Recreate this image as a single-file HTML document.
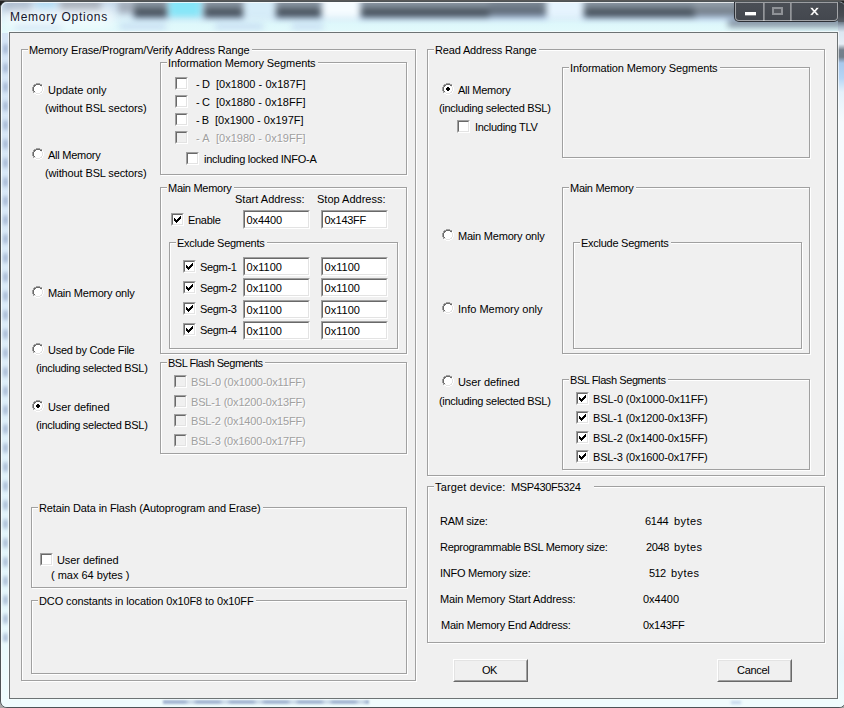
<!DOCTYPE html>
<html><head><meta charset="utf-8"><title>Memory Options</title>
<style>
html,body{margin:0;padding:0;}
body{width:844px;height:708px;overflow:hidden;position:relative;background:linear-gradient(#1b1b1b 0,#1b1b1b 50%,#a8a8a8 50%);font:11px/13px "Liberation Sans", sans-serif;color:#000;}
.a{position:absolute;}
.t{position:absolute;white-space:pre;line-height:13px;height:13px;font-size:11px;color:#000;}
.d{color:#a0a0a0;text-shadow:1px 1px 0 #fff;}
.g{position:absolute;border:1px solid #a0a0a0;box-shadow:1px 1px 0 #fff, inset 1px 1px 0 #fff;box-sizing:border-box;}
.gl{position:absolute;background:#f0f0f0;height:13px;line-height:13px;white-space:pre;}
.e{position:absolute;box-sizing:border-box;background:#fff;border:1px solid;border-color:#a0a0a0 #fff #fff #a0a0a0;}
.e i{position:absolute;left:0;top:0;right:0;bottom:0;border:1px solid;border-color:#696969 #e3e3e3 #e3e3e3 #696969;}
.e span{position:absolute;left:2.5px;top:3px;line-height:13px;white-space:pre;}
.c{position:absolute;width:13px;height:13px;box-sizing:border-box;background:#fff;border:1px solid;border-color:#a0a0a0 #fff #fff #a0a0a0;}
.c i{position:absolute;left:0;top:0;right:0;bottom:0;border:1px solid;border-color:#696969 #e3e3e3 #e3e3e3 #696969;}
.c.x{background:#f0f0f0;}
.c svg{position:absolute;left:1px;top:1px;}
.r{position:absolute;width:12px;height:12px;}
.btn{position:absolute;box-sizing:border-box;width:75px;height:23px;background:#f0f0f0;border:1px solid;border-color:#fff #696969 #696969 #fff;text-align:center;line-height:19px;}
.btn i{position:absolute;left:0;top:0;right:0;bottom:0;border:1px solid;border-color:#e3e3e3 #a0a0a0 #a0a0a0 #e3e3e3;}
</style></head><body>
<!-- desktop behind (top rows) -->
<div class="a" style="left:0;top:0;width:844px;height:3px;background:linear-gradient(#585858 0,#585858 1px,#222 1px)"></div>
<!-- window frame -->
<div class="a" id="win" style="left:0;top:1px;width:846px;height:707px;box-sizing:border-box;border:1px solid #4d5356;border-radius:7px 7px 7px 7px;background:#dff8fb;overflow:hidden">
 <!-- glass title area -->
 <div class="a" style="left:0;top:0;width:844px;height:31px;background:linear-gradient(to bottom,#c6d8ea 0,#cfe2f1 8px,#d9eff8 16px,#def8fb 22px,#e2fafc 30px)"></div>
 <div class="a" style="left:0;top:-8px;width:860px;height:40px;filter:blur(3px)">
  <div class="a" style="left:3px;top:6px;width:27px;height:12px;background:#a9b9cc"></div>
  <div class="a" style="left:35px;top:6px;width:20px;height:10px;background:#aedaf5"></div>
  <div class="a" style="left:59px;top:6px;width:41px;height:11px;background:#a0a8b4"></div>
  <div class="a" style="left:117px;top:6px;width:17px;height:13px;background:#a4aebb"></div>
  <div class="a" style="left:131px;top:21px;width:37px;height:4px;background:#b4cdf0"></div>
  <div class="a" style="left:201px;top:21px;width:43px;height:4px;background:#b4cdf0"></div>
  <div class="a" style="left:273px;top:21px;width:49px;height:4px;background:#b4cdf0"></div>
  <div class="a" style="left:358px;top:21px;width:132px;height:4px;background:#b4cdf0"></div>
  <div class="a" style="left:581px;top:21px;width:281px;height:4px;background:#b4cdf0"></div>
  <div class="a" style="left:486px;top:21px;width:61px;height:4px;background:#b4cdf0"></div>
  <div class="a" style="left:133px;top:2px;width:33px;height:21px;background:linear-gradient(#929eaa 0,#8f9ba7 7px,#6f7b87 12px,#46505a 16px,#39434c 19px,#39434c)"></div>
  <div class="a" style="left:203px;top:2px;width:39px;height:21px;background:linear-gradient(#929eaa 0,#8f9ba7 7px,#6f7b87 12px,#46505a 16px,#39434c 19px,#39434c)"></div>
  <div class="a" style="left:275px;top:2px;width:45px;height:21px;background:linear-gradient(#929eaa 0,#8f9ba7 7px,#6f7b87 12px,#46505a 16px,#39434c 19px,#39434c)"></div>
  <div class="a" style="left:360px;top:2px;width:128px;height:21px;background:linear-gradient(#929eaa 0,#8f9ba7 7px,#6f7b87 12px,#46505a 16px,#39434c 19px,#39434c)"></div>
  <div class="a" style="left:583px;top:2px;width:112px;height:21px;background:linear-gradient(#929eaa 0,#8f9ba7 7px,#6f7b87 12px,#46505a 16px,#39434c 19px,#39434c)"></div>
  <div class="a" style="left:693px;top:2px;width:45px;height:20px;background:linear-gradient(#98a3ae 0,#95a0ab 7px,#848f9a 12px,#737e89 16px,#6d7883 19px,#6d7883)"></div>
  <div class="a" style="left:736px;top:2px;width:124px;height:21px;background:linear-gradient(#929eaa 0,#8f9ba7 7px,#6f7b87 12px,#46505a 16px,#39434c 19px,#39434c)"></div>
  <div class="a" style="left:488px;top:2px;width:57px;height:20px;background:linear-gradient(#8b97a3 0,#7b8794 8px,#65717e 13px,#5c6875)"></div>
  <div class="a" style="left:168px;top:2px;width:32px;height:21px;background:#86e6f8"></div>
  <div class="a" style="left:244px;top:2px;width:29px;height:21px;background:#d6edf9"></div>
  <div class="a" style="left:322px;top:2px;width:36px;height:21px;background:#f6fcff"></div>
  <div class="a" style="left:546px;top:2px;width:35px;height:21px;background:#e6f4fe"></div>
  <div class="a" style="left:727px;top:26px;width:133px;height:7px;background:#7e8b9b"></div>
  <div class="a" style="left:14px;top:30px;width:46px;height:5px;background:#c4d9f1"></div>
  <div class="a" style="left:119px;top:30px;width:46px;height:5px;background:#c4d9f1"></div>
  <div class="a" style="left:214px;top:30px;width:48px;height:5px;background:#c4d9f1"></div>
  <div class="a" style="left:291px;top:30px;width:31px;height:5px;background:#c4d9f1"></div>
 </div>
 <div class="a" style="left:2px;top:6px;width:112px;height:20px;border-radius:10px;background:rgba(255,255,255,.55);filter:blur(5px)"></div>
 <div class="a" id="ttl" style="left:9px;top:8px;font-size:12px;line-height:14px;height:14px;white-space:pre;color:#15152a;letter-spacing:0.7px">Memory Options</div>
 <!-- inner highlight -->
 <div class="a" style="left:0;top:0;width:850px;height:705px;box-sizing:border-box;border:1px solid rgba(255,255,255,.75);border-radius:6px;"></div>
 <!-- caption buttons -->
 <div class="a" style="left:733px;top:-2px;width:105px;height:22px;box-sizing:border-box;border:1px solid rgba(40,44,50,.85);border-radius:0 0 5px 5px;background:linear-gradient(#4b4f56,#43474e)">
  <div class="a" style="left:0;top:1px;width:103px;height:19px;box-sizing:border-box;border:1px solid rgba(255,255,255,.5);border-top-color:rgba(255,255,255,.45);border-radius:0 0 4px 4px"></div>
  <div class="a" style="left:28px;top:2px;width:1px;height:18px;background:rgba(255,255,255,.42)"></div>
  <div class="a" style="left:29px;top:2px;width:1px;height:18px;background:rgba(255,255,255,.30)"></div>
  <div class="a" style="left:55px;top:2px;width:1px;height:18px;background:rgba(255,255,255,.42)"></div>
  <div class="a" style="left:56px;top:2px;width:1px;height:18px;background:rgba(255,255,255,.30)"></div>
  <!-- min -->
  <div class="a" style="left:10px;top:11px;width:11px;height:3px;background:#fff"></div>
  <div class="a" style="left:10px;top:14px;width:11px;height:1px;background:rgba(255,255,255,.35)"></div>
  <!-- max (disabled) -->
  <div class="a" style="left:37px;top:6px;width:11px;height:8px;box-sizing:border-box;border:2px solid #8f9297;background:#55585e"></div>
  <!-- close -->
  <svg class="a" style="left:73px;top:5px" width="13" height="11" viewBox="0 0 13 11"><path d="M1.6 1.5h3l1.9 2.5 1.9-2.5h3l-3.4 3.9 3.4 3.9h-3l-1.9-2.5-1.9 2.5h-3l3.4-3.9z" fill="#fff" stroke="#2a2c30" stroke-width=".5"/></svg>
 </div>
 <div class="a" style="left:837px;top:0;width:9px;height:20px;background:linear-gradient(#3c4046,#484c53 70%,#596069)"></div>
 <!-- side strips decoration -->
 <div class="a" style="left:1px;top:31px;width:7px;height:668px;background:linear-gradient(to bottom,#d6e6f6,#dcecf8 40%,#e6f8fc 85%,#effdfe)"></div>
 <div class="a" style="left:2px;top:40px;width:5px;height:600px;filter:blur(1.5px);opacity:.8;background:repeating-linear-gradient(to bottom,rgba(140,160,195,0) 0,rgba(140,160,195,.75) 5px,rgba(140,160,195,.75) 9px,rgba(140,160,195,0) 14px,rgba(140,160,195,0) 19px)"></div>
 <div class="a" style="left:837px;top:20px;width:8px;height:680px;background:linear-gradient(to bottom,#6f7b88 0,#a9b8c8 5px,#dbe6f0 10px,#e6eef6 22px,#75808c 28px,#737f8b 35px,#a8c8ec 41px,#b5d5f5 56px,#e4f1fb 70px,#f6fbfe 100px,#f7fcfe 560px,#eaf6fb 640px,#effcfd)"></div>
 <div class="a" style="left:1px;top:698px;width:844px;height:8px;background:#effcfd"></div>
 <div class="a" style="left:162px;top:698px;width:206px;height:4px;filter:blur(1.3px);background:repeating-linear-gradient(to right,rgba(150,170,202,.85) 0,rgba(150,170,202,.85) 22px,rgba(175,192,218,.55) 26px,rgba(175,192,218,.55) 30px,rgba(150,170,202,.85) 34px)"></div>
 <div class="a" style="left:730px;top:699px;width:10px;height:3px;filter:blur(1.5px);background:rgba(170,195,225,.7)"></div>
</div>
<div class="a" style="left:9px;top:32px;width:829px;height:667px;box-sizing:border-box;border:1px solid #6d7374;background:#f0f0f0;box-shadow:0 0 0 1px rgba(255,255,255,.6)"></div>
<div class="btn" style="left:453px;top:659px"><i></i></div>
<div class="btn" style="left:717px;top:659px"><i></i></div>
<div class="g" style="left:21px;top:49px;width:395px;height:632px"></div><div class="gl" style="left:28px;top:44px;width:224px;"><span style="margin-left:1px;letter-spacing:-0.124px">Memory Erase/Program/Verify Address Range</span></div>
<div class="g" style="left:160px;top:62px;width:247px;height:113px"></div><div class="gl" style="left:167px;top:57px;width:151px;"><span style="margin-left:1px;letter-spacing:-0.107px">Information Memory Segments</span></div>
<div class="g" style="left:160px;top:187px;width:247px;height:167px"></div><div class="gl" style="left:167px;top:182px;width:67px;"><span style="margin-left:1px;letter-spacing:-0.284px">Main Memory</span></div>
<div class="g" style="left:169px;top:242px;width:229px;height:107px"></div><div class="gl" style="left:176px;top:237px;width:91px;"><span style="margin-left:1px;letter-spacing:-0.264px">Exclude Segments</span></div>
<div class="g" style="left:160px;top:362px;width:247px;height:92px"></div><div class="gl" style="left:167px;top:357px;width:98px;"><span style="margin-left:1px;letter-spacing:-0.468px">BSL Flash Segments</span></div>
<div class="g" style="left:31px;top:507px;width:376px;height:81px"></div><div class="gl" style="left:38px;top:502px;width:225px;"><span style="margin-left:1px;letter-spacing:-0.121px">Retain Data in Flash (Autoprogram and Erase)</span></div>
<div class="g" style="left:31px;top:600px;width:376px;height:74px"></div><div class="gl" style="left:38px;top:595px;width:218px;"><span style="margin-left:1px;letter-spacing:-0.119px">DCO constants in location 0x10F8 to 0x10FF</span></div>
<div class="g" style="left:427px;top:49px;width:398px;height:427px"></div><div class="gl" style="left:434px;top:44px;width:105px;"><span style="margin-left:1px;letter-spacing:-0.171px">Read Address Range</span></div>
<div class="g" style="left:562px;top:67px;width:248px;height:91px"></div><div class="gl" style="left:569px;top:62px;width:151px;"><span style="margin-left:1px;letter-spacing:-0.107px">Information Memory Segments</span></div>
<div class="g" style="left:562px;top:187px;width:248px;height:167px"></div><div class="gl" style="left:569px;top:182px;width:67px;"><span style="margin-left:1px;letter-spacing:-0.284px">Main Memory</span></div>
<div class="g" style="left:573px;top:242px;width:229px;height:107px"></div><div class="gl" style="left:580px;top:237px;width:91px;"><span style="margin-left:1px;letter-spacing:-0.264px">Exclude Segments</span></div>
<div class="g" style="left:562px;top:379px;width:248px;height:91px"></div><div class="gl" style="left:569px;top:374px;width:99px;"><span style="margin-left:1px;letter-spacing:-0.412px">BSL Flash Segments</span></div>
<div class="g" style="left:427px;top:486px;width:398px;height:157px"></div><div class="gl" style="left:434px;top:481px;width:160px;"><span style="margin-left:1px;letter-spacing:0.144px">Target device:</span></div>
<span class="t" style="left:48px;top:84px;letter-spacing:-0.020px">Update only</span>
<span class="t" style="left:45px;top:102px;letter-spacing:-0.126px">(without BSL sectors)</span>
<span class="t" style="left:48px;top:149px;letter-spacing:-0.252px">All Memory</span>
<span class="t" style="left:45px;top:167px;letter-spacing:-0.126px">(without BSL sectors)</span>
<span class="t" style="left:48px;top:287px;letter-spacing:-0.210px">Main Memory only</span>
<span class="t" style="left:48px;top:344px;letter-spacing:-0.235px">Used by Code File</span>
<span class="t" style="left:36px;top:362px;letter-spacing:-0.297px">(including selected BSL)</span>
<span class="t" style="left:48px;top:401px;letter-spacing:-0.073px">User defined</span>
<span class="t" style="left:36px;top:419px;letter-spacing:-0.297px">(including selected BSL)</span>
<span class="t" style="left:196px;top:78px;letter-spacing:-0.391px">- D</span>
<span class="t" style="left:216px;top:78px;letter-spacing:0.049px">[0x1800 - 0x187F]</span>
<span class="t" style="left:196px;top:96px;letter-spacing:-0.391px">- C</span>
<span class="t" style="left:216px;top:96px;letter-spacing:0.013px">[0x1880 - 0x18FF]</span>
<span class="t" style="left:196px;top:114px;letter-spacing:-0.521px">- B</span>
<span class="t" style="left:215px;top:114px;letter-spacing:-0.010px">[0x1900 - 0x197F]</span>
<span class="t d" style="left:196px;top:132px;letter-spacing:0.016px">- A</span>
<span class="t d" style="left:216px;top:132px;letter-spacing:0.013px">[0x1980 - 0x19FF]</span>
<span class="t" style="left:204px;top:153px;letter-spacing:-0.266px">including locked INFO-A</span>
<span class="t" style="left:235px;top:193px;letter-spacing:0.029px">Start Address:</span>
<span class="t" style="left:317px;top:193px;letter-spacing:0.000px">Stop Address:</span>
<span class="t" style="left:188px;top:214px;letter-spacing:-0.294px">Enable</span>
<span class="t" style="left:200px;top:261px;letter-spacing:-0.339px">Segm-1</span>
<span class="t" style="left:200px;top:282px;letter-spacing:-0.339px">Segm-2</span>
<span class="t" style="left:200px;top:303px;letter-spacing:-0.339px">Segm-3</span>
<span class="t" style="left:200px;top:324px;letter-spacing:-0.339px">Segm-4</span>
<span class="t d" style="left:191px;top:376px;letter-spacing:-0.128px">BSL-0 (0x1000-0x11FF)</span>
<span class="t d" style="left:191px;top:396px;letter-spacing:-0.167px">BSL-1 (0x1200-0x13FF)</span>
<span class="t d" style="left:191px;top:415px;letter-spacing:-0.167px">BSL-2 (0x1400-0x15FF)</span>
<span class="t d" style="left:191px;top:435px;letter-spacing:-0.167px">BSL-3 (0x1600-0x17FF)</span>
<span class="t" style="left:57px;top:554px;letter-spacing:-0.073px">User defined</span>
<span class="t" style="left:51px;top:569px;letter-spacing:-0.022px">( max 64 bytes )</span>
<span class="t" style="left:458px;top:84px;letter-spacing:-0.252px">All Memory</span>
<span class="t" style="left:439px;top:102px;letter-spacing:-0.297px">(including selected BSL)</span>
<span class="t" style="left:475px;top:121px;letter-spacing:-0.288px">Including TLV</span>
<span class="t" style="left:458px;top:230px;letter-spacing:-0.210px">Main Memory only</span>
<span class="t" style="left:458px;top:303px;letter-spacing:0.008px">Info Memory only</span>
<span class="t" style="left:458px;top:376px;letter-spacing:-0.073px">User defined</span>
<span class="t" style="left:439px;top:395px;letter-spacing:-0.297px">(including selected BSL)</span>
<span class="t" style="left:593px;top:393px;letter-spacing:-0.128px">BSL-0 (0x1000-0x11FF)</span>
<span class="t" style="left:593px;top:412px;letter-spacing:-0.167px">BSL-1 (0x1200-0x13FF)</span>
<span class="t" style="left:593px;top:432px;letter-spacing:-0.167px">BSL-2 (0x1400-0x15FF)</span>
<span class="t" style="left:593px;top:451px;letter-spacing:-0.167px">BSL-3 (0x1600-0x17FF)</span>
<span class="t" style="left:511px;top:481px;letter-spacing:-0.354px">MSP430F5324</span>
<span class="t" style="left:440px;top:515px;letter-spacing:-0.292px">RAM size:</span>
<span class="t" style="left:440px;top:541px;letter-spacing:-0.303px">Reprogrammable BSL Memory size:</span>
<span class="t" style="left:440px;top:567px;letter-spacing:-0.249px">INFO Memory size:</span>
<span class="t" style="left:440px;top:593px;letter-spacing:-0.126px">Main Memory Start Address:</span>
<span class="t" style="left:441px;top:619px;letter-spacing:-0.234px">Main Memory End Address:</span>
<span class="t" style="left:645px;top:515px;letter-spacing:-0.246px">6144</span>
<span class="t" style="left:674px;top:515px;letter-spacing:0.441px">bytes</span>
<span class="t" style="left:646px;top:541px;letter-spacing:-0.371px">2048</span>
<span class="t" style="left:674px;top:541px;letter-spacing:0.441px">bytes</span>
<span class="t" style="left:649px;top:567px;letter-spacing:-0.620px">512</span>
<span class="t" style="left:671px;top:567px;letter-spacing:0.441px">bytes</span>
<span class="t" style="left:643px;top:593px;letter-spacing:-0.016px">0x4400</span>
<span class="t" style="left:482px;top:664px;letter-spacing:-0.453px">OK</span>
<span class="t" style="left:737px;top:664px;letter-spacing:-0.292px">Cancel</span>
<span class="t" style="left:643px;top:619px;letter-spacing:-0.275px">0x143FF</span>
<div class="e" style="left:243px;top:210px;width:67px;height:19px"><i></i><span style="letter-spacing:-0.099px">0x4400</span></div>
<div class="e" style="left:321px;top:210px;width:67px;height:19px"><i></i><span style="letter-spacing:-0.275px">0x143FF</span></div>
<div class="e" style="left:243px;top:257px;width:67px;height:19px"><i></i><span style="letter-spacing:0.036px">0x1100</span></div>
<div class="e" style="left:321px;top:257px;width:67px;height:19px"><i></i><span style="letter-spacing:0.036px">0x1100</span></div>
<div class="e" style="left:243px;top:278px;width:67px;height:19px"><i></i><span style="letter-spacing:0.036px">0x1100</span></div>
<div class="e" style="left:321px;top:278px;width:67px;height:19px"><i></i><span style="letter-spacing:0.036px">0x1100</span></div>
<div class="e" style="left:243px;top:300px;width:67px;height:19px"><i></i><span style="letter-spacing:0.036px">0x1100</span></div>
<div class="e" style="left:321px;top:300px;width:67px;height:19px"><i></i><span style="letter-spacing:0.036px">0x1100</span></div>
<div class="e" style="left:243px;top:321px;width:67px;height:19px"><i></i><span style="letter-spacing:0.036px">0x1100</span></div>
<div class="e" style="left:321px;top:321px;width:67px;height:19px"><i></i><span style="letter-spacing:0.036px">0x1100</span></div>
<div class="c" style="left:175px;top:77px"><i></i></div>
<div class="c" style="left:175px;top:95px"><i></i></div>
<div class="c" style="left:175px;top:113px"><i></i></div>
<div class="c x" style="left:175px;top:131px"><i></i></div>
<div class="c" style="left:186px;top:152px"><i></i></div>
<div class="c" style="left:171px;top:213px"><i></i><svg width="9" height="9" viewBox="0 0 9 9" shape-rendering="crispEdges"><path fill="#000" d="M1 3h1v3h-1zM2 4h1v3h-1zM3 5h1v3h-1zM4 4h1v3h-1zM5 3h1v3h-1zM6 2h1v3h-1zM7 1h1v3h-1z"/></svg></div>
<div class="c" style="left:183px;top:260px"><i></i><svg width="9" height="9" viewBox="0 0 9 9" shape-rendering="crispEdges"><path fill="#000" d="M1 3h1v3h-1zM2 4h1v3h-1zM3 5h1v3h-1zM4 4h1v3h-1zM5 3h1v3h-1zM6 2h1v3h-1zM7 1h1v3h-1z"/></svg></div>
<div class="c" style="left:183px;top:281px"><i></i><svg width="9" height="9" viewBox="0 0 9 9" shape-rendering="crispEdges"><path fill="#000" d="M1 3h1v3h-1zM2 4h1v3h-1zM3 5h1v3h-1zM4 4h1v3h-1zM5 3h1v3h-1zM6 2h1v3h-1zM7 1h1v3h-1z"/></svg></div>
<div class="c" style="left:183px;top:302px"><i></i><svg width="9" height="9" viewBox="0 0 9 9" shape-rendering="crispEdges"><path fill="#000" d="M1 3h1v3h-1zM2 4h1v3h-1zM3 5h1v3h-1zM4 4h1v3h-1zM5 3h1v3h-1zM6 2h1v3h-1zM7 1h1v3h-1z"/></svg></div>
<div class="c" style="left:183px;top:323px"><i></i><svg width="9" height="9" viewBox="0 0 9 9" shape-rendering="crispEdges"><path fill="#000" d="M1 3h1v3h-1zM2 4h1v3h-1zM3 5h1v3h-1zM4 4h1v3h-1zM5 3h1v3h-1zM6 2h1v3h-1zM7 1h1v3h-1z"/></svg></div>
<div class="c x" style="left:174px;top:375px"><i></i></div>
<div class="c x" style="left:174px;top:395px"><i></i></div>
<div class="c x" style="left:174px;top:414px"><i></i></div>
<div class="c x" style="left:174px;top:434px"><i></i></div>
<div class="c" style="left:40px;top:553px"><i></i></div>
<div class="c" style="left:457px;top:120px"><i></i></div>
<div class="c" style="left:576px;top:392px"><i></i><svg width="9" height="9" viewBox="0 0 9 9" shape-rendering="crispEdges"><path fill="#000" d="M1 3h1v3h-1zM2 4h1v3h-1zM3 5h1v3h-1zM4 4h1v3h-1zM5 3h1v3h-1zM6 2h1v3h-1zM7 1h1v3h-1z"/></svg></div>
<div class="c" style="left:576px;top:411px"><i></i><svg width="9" height="9" viewBox="0 0 9 9" shape-rendering="crispEdges"><path fill="#000" d="M1 3h1v3h-1zM2 4h1v3h-1zM3 5h1v3h-1zM4 4h1v3h-1zM5 3h1v3h-1zM6 2h1v3h-1zM7 1h1v3h-1z"/></svg></div>
<div class="c" style="left:576px;top:431px"><i></i><svg width="9" height="9" viewBox="0 0 9 9" shape-rendering="crispEdges"><path fill="#000" d="M1 3h1v3h-1zM2 4h1v3h-1zM3 5h1v3h-1zM4 4h1v3h-1zM5 3h1v3h-1zM6 2h1v3h-1zM7 1h1v3h-1z"/></svg></div>
<div class="c" style="left:576px;top:450px"><i></i><svg width="9" height="9" viewBox="0 0 9 9" shape-rendering="crispEdges"><path fill="#000" d="M1 3h1v3h-1zM2 4h1v3h-1zM3 5h1v3h-1zM4 4h1v3h-1zM5 3h1v3h-1zM6 2h1v3h-1zM7 1h1v3h-1z"/></svg></div>
<div class="r" style="left:32px;top:83px"><svg width="12" height="12" viewBox="0 0 12 12" shape-rendering="crispEdges"><path fill="#a0a0a0" d="M4 0h1v1h-1zM5 0h1v1h-1zM6 0h1v1h-1zM7 0h1v1h-1zM2 1h1v1h-1zM3 1h1v1h-1zM8 1h1v1h-1zM9 1h1v1h-1zM1 2h1v1h-1zM1 3h1v1h-1zM0 4h1v1h-1zM0 5h1v1h-1zM0 6h1v1h-1zM0 7h1v1h-1zM1 8h1v1h-1zM1 9h1v1h-1z"/><path fill="#696969" d="M4 1h1v1h-1zM5 1h1v1h-1zM6 1h1v1h-1zM7 1h1v1h-1zM2 2h1v1h-1zM3 2h1v1h-1zM8 2h1v1h-1zM9 2h1v1h-1zM2 3h1v1h-1zM1 4h1v1h-1zM1 5h1v1h-1zM1 6h1v1h-1zM1 7h1v1h-1zM2 8h1v1h-1z"/><path fill="#ffffff" d="M4 2h1v1h-1zM5 2h1v1h-1zM6 2h1v1h-1zM7 2h1v1h-1zM10 2h1v1h-1zM3 3h1v1h-1zM4 3h1v1h-1zM5 3h1v1h-1zM6 3h1v1h-1zM7 3h1v1h-1zM8 3h1v1h-1zM10 3h1v1h-1zM2 4h1v1h-1zM3 4h1v1h-1zM4 4h1v1h-1zM5 4h1v1h-1zM6 4h1v1h-1zM7 4h1v1h-1zM8 4h1v1h-1zM9 4h1v1h-1zM11 4h1v1h-1zM2 5h1v1h-1zM3 5h1v1h-1zM4 5h1v1h-1zM5 5h1v1h-1zM6 5h1v1h-1zM7 5h1v1h-1zM8 5h1v1h-1zM9 5h1v1h-1zM11 5h1v1h-1zM2 6h1v1h-1zM3 6h1v1h-1zM4 6h1v1h-1zM5 6h1v1h-1zM6 6h1v1h-1zM7 6h1v1h-1zM8 6h1v1h-1zM9 6h1v1h-1zM11 6h1v1h-1zM2 7h1v1h-1zM3 7h1v1h-1zM4 7h1v1h-1zM5 7h1v1h-1zM6 7h1v1h-1zM7 7h1v1h-1zM8 7h1v1h-1zM9 7h1v1h-1zM11 7h1v1h-1zM3 8h1v1h-1zM4 8h1v1h-1zM5 8h1v1h-1zM6 8h1v1h-1zM7 8h1v1h-1zM8 8h1v1h-1zM10 8h1v1h-1zM4 9h1v1h-1zM5 9h1v1h-1zM6 9h1v1h-1zM7 9h1v1h-1zM10 9h1v1h-1zM2 10h1v1h-1zM3 10h1v1h-1zM8 10h1v1h-1zM9 10h1v1h-1zM4 11h1v1h-1zM5 11h1v1h-1zM6 11h1v1h-1zM7 11h1v1h-1z"/><path fill="#e3e3e3" d="M9 3h1v1h-1zM10 4h1v1h-1zM10 5h1v1h-1zM10 6h1v1h-1zM10 7h1v1h-1zM9 8h1v1h-1zM2 9h1v1h-1zM3 9h1v1h-1zM8 9h1v1h-1zM9 9h1v1h-1zM4 10h1v1h-1zM5 10h1v1h-1zM6 10h1v1h-1zM7 10h1v1h-1z"/></svg></div>
<div class="r" style="left:32px;top:148px"><svg width="12" height="12" viewBox="0 0 12 12" shape-rendering="crispEdges"><path fill="#a0a0a0" d="M4 0h1v1h-1zM5 0h1v1h-1zM6 0h1v1h-1zM7 0h1v1h-1zM2 1h1v1h-1zM3 1h1v1h-1zM8 1h1v1h-1zM9 1h1v1h-1zM1 2h1v1h-1zM1 3h1v1h-1zM0 4h1v1h-1zM0 5h1v1h-1zM0 6h1v1h-1zM0 7h1v1h-1zM1 8h1v1h-1zM1 9h1v1h-1z"/><path fill="#696969" d="M4 1h1v1h-1zM5 1h1v1h-1zM6 1h1v1h-1zM7 1h1v1h-1zM2 2h1v1h-1zM3 2h1v1h-1zM8 2h1v1h-1zM9 2h1v1h-1zM2 3h1v1h-1zM1 4h1v1h-1zM1 5h1v1h-1zM1 6h1v1h-1zM1 7h1v1h-1zM2 8h1v1h-1z"/><path fill="#ffffff" d="M4 2h1v1h-1zM5 2h1v1h-1zM6 2h1v1h-1zM7 2h1v1h-1zM10 2h1v1h-1zM3 3h1v1h-1zM4 3h1v1h-1zM5 3h1v1h-1zM6 3h1v1h-1zM7 3h1v1h-1zM8 3h1v1h-1zM10 3h1v1h-1zM2 4h1v1h-1zM3 4h1v1h-1zM4 4h1v1h-1zM5 4h1v1h-1zM6 4h1v1h-1zM7 4h1v1h-1zM8 4h1v1h-1zM9 4h1v1h-1zM11 4h1v1h-1zM2 5h1v1h-1zM3 5h1v1h-1zM4 5h1v1h-1zM5 5h1v1h-1zM6 5h1v1h-1zM7 5h1v1h-1zM8 5h1v1h-1zM9 5h1v1h-1zM11 5h1v1h-1zM2 6h1v1h-1zM3 6h1v1h-1zM4 6h1v1h-1zM5 6h1v1h-1zM6 6h1v1h-1zM7 6h1v1h-1zM8 6h1v1h-1zM9 6h1v1h-1zM11 6h1v1h-1zM2 7h1v1h-1zM3 7h1v1h-1zM4 7h1v1h-1zM5 7h1v1h-1zM6 7h1v1h-1zM7 7h1v1h-1zM8 7h1v1h-1zM9 7h1v1h-1zM11 7h1v1h-1zM3 8h1v1h-1zM4 8h1v1h-1zM5 8h1v1h-1zM6 8h1v1h-1zM7 8h1v1h-1zM8 8h1v1h-1zM10 8h1v1h-1zM4 9h1v1h-1zM5 9h1v1h-1zM6 9h1v1h-1zM7 9h1v1h-1zM10 9h1v1h-1zM2 10h1v1h-1zM3 10h1v1h-1zM8 10h1v1h-1zM9 10h1v1h-1zM4 11h1v1h-1zM5 11h1v1h-1zM6 11h1v1h-1zM7 11h1v1h-1z"/><path fill="#e3e3e3" d="M9 3h1v1h-1zM10 4h1v1h-1zM10 5h1v1h-1zM10 6h1v1h-1zM10 7h1v1h-1zM9 8h1v1h-1zM2 9h1v1h-1zM3 9h1v1h-1zM8 9h1v1h-1zM9 9h1v1h-1zM4 10h1v1h-1zM5 10h1v1h-1zM6 10h1v1h-1zM7 10h1v1h-1z"/></svg></div>
<div class="r" style="left:32px;top:286px"><svg width="12" height="12" viewBox="0 0 12 12" shape-rendering="crispEdges"><path fill="#a0a0a0" d="M4 0h1v1h-1zM5 0h1v1h-1zM6 0h1v1h-1zM7 0h1v1h-1zM2 1h1v1h-1zM3 1h1v1h-1zM8 1h1v1h-1zM9 1h1v1h-1zM1 2h1v1h-1zM1 3h1v1h-1zM0 4h1v1h-1zM0 5h1v1h-1zM0 6h1v1h-1zM0 7h1v1h-1zM1 8h1v1h-1zM1 9h1v1h-1z"/><path fill="#696969" d="M4 1h1v1h-1zM5 1h1v1h-1zM6 1h1v1h-1zM7 1h1v1h-1zM2 2h1v1h-1zM3 2h1v1h-1zM8 2h1v1h-1zM9 2h1v1h-1zM2 3h1v1h-1zM1 4h1v1h-1zM1 5h1v1h-1zM1 6h1v1h-1zM1 7h1v1h-1zM2 8h1v1h-1z"/><path fill="#ffffff" d="M4 2h1v1h-1zM5 2h1v1h-1zM6 2h1v1h-1zM7 2h1v1h-1zM10 2h1v1h-1zM3 3h1v1h-1zM4 3h1v1h-1zM5 3h1v1h-1zM6 3h1v1h-1zM7 3h1v1h-1zM8 3h1v1h-1zM10 3h1v1h-1zM2 4h1v1h-1zM3 4h1v1h-1zM4 4h1v1h-1zM5 4h1v1h-1zM6 4h1v1h-1zM7 4h1v1h-1zM8 4h1v1h-1zM9 4h1v1h-1zM11 4h1v1h-1zM2 5h1v1h-1zM3 5h1v1h-1zM4 5h1v1h-1zM5 5h1v1h-1zM6 5h1v1h-1zM7 5h1v1h-1zM8 5h1v1h-1zM9 5h1v1h-1zM11 5h1v1h-1zM2 6h1v1h-1zM3 6h1v1h-1zM4 6h1v1h-1zM5 6h1v1h-1zM6 6h1v1h-1zM7 6h1v1h-1zM8 6h1v1h-1zM9 6h1v1h-1zM11 6h1v1h-1zM2 7h1v1h-1zM3 7h1v1h-1zM4 7h1v1h-1zM5 7h1v1h-1zM6 7h1v1h-1zM7 7h1v1h-1zM8 7h1v1h-1zM9 7h1v1h-1zM11 7h1v1h-1zM3 8h1v1h-1zM4 8h1v1h-1zM5 8h1v1h-1zM6 8h1v1h-1zM7 8h1v1h-1zM8 8h1v1h-1zM10 8h1v1h-1zM4 9h1v1h-1zM5 9h1v1h-1zM6 9h1v1h-1zM7 9h1v1h-1zM10 9h1v1h-1zM2 10h1v1h-1zM3 10h1v1h-1zM8 10h1v1h-1zM9 10h1v1h-1zM4 11h1v1h-1zM5 11h1v1h-1zM6 11h1v1h-1zM7 11h1v1h-1z"/><path fill="#e3e3e3" d="M9 3h1v1h-1zM10 4h1v1h-1zM10 5h1v1h-1zM10 6h1v1h-1zM10 7h1v1h-1zM9 8h1v1h-1zM2 9h1v1h-1zM3 9h1v1h-1zM8 9h1v1h-1zM9 9h1v1h-1zM4 10h1v1h-1zM5 10h1v1h-1zM6 10h1v1h-1zM7 10h1v1h-1z"/></svg></div>
<div class="r" style="left:32px;top:343px"><svg width="12" height="12" viewBox="0 0 12 12" shape-rendering="crispEdges"><path fill="#a0a0a0" d="M4 0h1v1h-1zM5 0h1v1h-1zM6 0h1v1h-1zM7 0h1v1h-1zM2 1h1v1h-1zM3 1h1v1h-1zM8 1h1v1h-1zM9 1h1v1h-1zM1 2h1v1h-1zM1 3h1v1h-1zM0 4h1v1h-1zM0 5h1v1h-1zM0 6h1v1h-1zM0 7h1v1h-1zM1 8h1v1h-1zM1 9h1v1h-1z"/><path fill="#696969" d="M4 1h1v1h-1zM5 1h1v1h-1zM6 1h1v1h-1zM7 1h1v1h-1zM2 2h1v1h-1zM3 2h1v1h-1zM8 2h1v1h-1zM9 2h1v1h-1zM2 3h1v1h-1zM1 4h1v1h-1zM1 5h1v1h-1zM1 6h1v1h-1zM1 7h1v1h-1zM2 8h1v1h-1z"/><path fill="#ffffff" d="M4 2h1v1h-1zM5 2h1v1h-1zM6 2h1v1h-1zM7 2h1v1h-1zM10 2h1v1h-1zM3 3h1v1h-1zM4 3h1v1h-1zM5 3h1v1h-1zM6 3h1v1h-1zM7 3h1v1h-1zM8 3h1v1h-1zM10 3h1v1h-1zM2 4h1v1h-1zM3 4h1v1h-1zM4 4h1v1h-1zM5 4h1v1h-1zM6 4h1v1h-1zM7 4h1v1h-1zM8 4h1v1h-1zM9 4h1v1h-1zM11 4h1v1h-1zM2 5h1v1h-1zM3 5h1v1h-1zM4 5h1v1h-1zM5 5h1v1h-1zM6 5h1v1h-1zM7 5h1v1h-1zM8 5h1v1h-1zM9 5h1v1h-1zM11 5h1v1h-1zM2 6h1v1h-1zM3 6h1v1h-1zM4 6h1v1h-1zM5 6h1v1h-1zM6 6h1v1h-1zM7 6h1v1h-1zM8 6h1v1h-1zM9 6h1v1h-1zM11 6h1v1h-1zM2 7h1v1h-1zM3 7h1v1h-1zM4 7h1v1h-1zM5 7h1v1h-1zM6 7h1v1h-1zM7 7h1v1h-1zM8 7h1v1h-1zM9 7h1v1h-1zM11 7h1v1h-1zM3 8h1v1h-1zM4 8h1v1h-1zM5 8h1v1h-1zM6 8h1v1h-1zM7 8h1v1h-1zM8 8h1v1h-1zM10 8h1v1h-1zM4 9h1v1h-1zM5 9h1v1h-1zM6 9h1v1h-1zM7 9h1v1h-1zM10 9h1v1h-1zM2 10h1v1h-1zM3 10h1v1h-1zM8 10h1v1h-1zM9 10h1v1h-1zM4 11h1v1h-1zM5 11h1v1h-1zM6 11h1v1h-1zM7 11h1v1h-1z"/><path fill="#e3e3e3" d="M9 3h1v1h-1zM10 4h1v1h-1zM10 5h1v1h-1zM10 6h1v1h-1zM10 7h1v1h-1zM9 8h1v1h-1zM2 9h1v1h-1zM3 9h1v1h-1zM8 9h1v1h-1zM9 9h1v1h-1zM4 10h1v1h-1zM5 10h1v1h-1zM6 10h1v1h-1zM7 10h1v1h-1z"/></svg></div>
<div class="r" style="left:32px;top:400px"><svg width="12" height="12" viewBox="0 0 12 12" shape-rendering="crispEdges"><path fill="#a0a0a0" d="M4 0h1v1h-1zM5 0h1v1h-1zM6 0h1v1h-1zM7 0h1v1h-1zM2 1h1v1h-1zM3 1h1v1h-1zM8 1h1v1h-1zM9 1h1v1h-1zM1 2h1v1h-1zM1 3h1v1h-1zM0 4h1v1h-1zM0 5h1v1h-1zM0 6h1v1h-1zM0 7h1v1h-1zM1 8h1v1h-1zM1 9h1v1h-1z"/><path fill="#696969" d="M4 1h1v1h-1zM5 1h1v1h-1zM6 1h1v1h-1zM7 1h1v1h-1zM2 2h1v1h-1zM3 2h1v1h-1zM8 2h1v1h-1zM9 2h1v1h-1zM2 3h1v1h-1zM1 4h1v1h-1zM1 5h1v1h-1zM1 6h1v1h-1zM1 7h1v1h-1zM2 8h1v1h-1z"/><path fill="#ffffff" d="M4 2h1v1h-1zM5 2h1v1h-1zM6 2h1v1h-1zM7 2h1v1h-1zM10 2h1v1h-1zM3 3h1v1h-1zM4 3h1v1h-1zM5 3h1v1h-1zM6 3h1v1h-1zM7 3h1v1h-1zM8 3h1v1h-1zM10 3h1v1h-1zM2 4h1v1h-1zM3 4h1v1h-1zM4 4h1v1h-1zM5 4h1v1h-1zM6 4h1v1h-1zM7 4h1v1h-1zM8 4h1v1h-1zM9 4h1v1h-1zM11 4h1v1h-1zM2 5h1v1h-1zM3 5h1v1h-1zM4 5h1v1h-1zM5 5h1v1h-1zM6 5h1v1h-1zM7 5h1v1h-1zM8 5h1v1h-1zM9 5h1v1h-1zM11 5h1v1h-1zM2 6h1v1h-1zM3 6h1v1h-1zM4 6h1v1h-1zM5 6h1v1h-1zM6 6h1v1h-1zM7 6h1v1h-1zM8 6h1v1h-1zM9 6h1v1h-1zM11 6h1v1h-1zM2 7h1v1h-1zM3 7h1v1h-1zM4 7h1v1h-1zM5 7h1v1h-1zM6 7h1v1h-1zM7 7h1v1h-1zM8 7h1v1h-1zM9 7h1v1h-1zM11 7h1v1h-1zM3 8h1v1h-1zM4 8h1v1h-1zM5 8h1v1h-1zM6 8h1v1h-1zM7 8h1v1h-1zM8 8h1v1h-1zM10 8h1v1h-1zM4 9h1v1h-1zM5 9h1v1h-1zM6 9h1v1h-1zM7 9h1v1h-1zM10 9h1v1h-1zM2 10h1v1h-1zM3 10h1v1h-1zM8 10h1v1h-1zM9 10h1v1h-1zM4 11h1v1h-1zM5 11h1v1h-1zM6 11h1v1h-1zM7 11h1v1h-1z"/><path fill="#e3e3e3" d="M9 3h1v1h-1zM10 4h1v1h-1zM10 5h1v1h-1zM10 6h1v1h-1zM10 7h1v1h-1zM9 8h1v1h-1zM2 9h1v1h-1zM3 9h1v1h-1zM8 9h1v1h-1zM9 9h1v1h-1zM4 10h1v1h-1zM5 10h1v1h-1zM6 10h1v1h-1zM7 10h1v1h-1z"/><path fill="#000" d="M5 4h2v1h1v2h-1v1h-2v-1h-1v-2h1z"/></svg></div>
<div class="r" style="left:442px;top:83px"><svg width="12" height="12" viewBox="0 0 12 12" shape-rendering="crispEdges"><path fill="#a0a0a0" d="M4 0h1v1h-1zM5 0h1v1h-1zM6 0h1v1h-1zM7 0h1v1h-1zM2 1h1v1h-1zM3 1h1v1h-1zM8 1h1v1h-1zM9 1h1v1h-1zM1 2h1v1h-1zM1 3h1v1h-1zM0 4h1v1h-1zM0 5h1v1h-1zM0 6h1v1h-1zM0 7h1v1h-1zM1 8h1v1h-1zM1 9h1v1h-1z"/><path fill="#696969" d="M4 1h1v1h-1zM5 1h1v1h-1zM6 1h1v1h-1zM7 1h1v1h-1zM2 2h1v1h-1zM3 2h1v1h-1zM8 2h1v1h-1zM9 2h1v1h-1zM2 3h1v1h-1zM1 4h1v1h-1zM1 5h1v1h-1zM1 6h1v1h-1zM1 7h1v1h-1zM2 8h1v1h-1z"/><path fill="#ffffff" d="M4 2h1v1h-1zM5 2h1v1h-1zM6 2h1v1h-1zM7 2h1v1h-1zM10 2h1v1h-1zM3 3h1v1h-1zM4 3h1v1h-1zM5 3h1v1h-1zM6 3h1v1h-1zM7 3h1v1h-1zM8 3h1v1h-1zM10 3h1v1h-1zM2 4h1v1h-1zM3 4h1v1h-1zM4 4h1v1h-1zM5 4h1v1h-1zM6 4h1v1h-1zM7 4h1v1h-1zM8 4h1v1h-1zM9 4h1v1h-1zM11 4h1v1h-1zM2 5h1v1h-1zM3 5h1v1h-1zM4 5h1v1h-1zM5 5h1v1h-1zM6 5h1v1h-1zM7 5h1v1h-1zM8 5h1v1h-1zM9 5h1v1h-1zM11 5h1v1h-1zM2 6h1v1h-1zM3 6h1v1h-1zM4 6h1v1h-1zM5 6h1v1h-1zM6 6h1v1h-1zM7 6h1v1h-1zM8 6h1v1h-1zM9 6h1v1h-1zM11 6h1v1h-1zM2 7h1v1h-1zM3 7h1v1h-1zM4 7h1v1h-1zM5 7h1v1h-1zM6 7h1v1h-1zM7 7h1v1h-1zM8 7h1v1h-1zM9 7h1v1h-1zM11 7h1v1h-1zM3 8h1v1h-1zM4 8h1v1h-1zM5 8h1v1h-1zM6 8h1v1h-1zM7 8h1v1h-1zM8 8h1v1h-1zM10 8h1v1h-1zM4 9h1v1h-1zM5 9h1v1h-1zM6 9h1v1h-1zM7 9h1v1h-1zM10 9h1v1h-1zM2 10h1v1h-1zM3 10h1v1h-1zM8 10h1v1h-1zM9 10h1v1h-1zM4 11h1v1h-1zM5 11h1v1h-1zM6 11h1v1h-1zM7 11h1v1h-1z"/><path fill="#e3e3e3" d="M9 3h1v1h-1zM10 4h1v1h-1zM10 5h1v1h-1zM10 6h1v1h-1zM10 7h1v1h-1zM9 8h1v1h-1zM2 9h1v1h-1zM3 9h1v1h-1zM8 9h1v1h-1zM9 9h1v1h-1zM4 10h1v1h-1zM5 10h1v1h-1zM6 10h1v1h-1zM7 10h1v1h-1z"/><path fill="#000" d="M5 4h2v1h1v2h-1v1h-2v-1h-1v-2h1z"/></svg></div>
<div class="r" style="left:442px;top:229px"><svg width="12" height="12" viewBox="0 0 12 12" shape-rendering="crispEdges"><path fill="#a0a0a0" d="M4 0h1v1h-1zM5 0h1v1h-1zM6 0h1v1h-1zM7 0h1v1h-1zM2 1h1v1h-1zM3 1h1v1h-1zM8 1h1v1h-1zM9 1h1v1h-1zM1 2h1v1h-1zM1 3h1v1h-1zM0 4h1v1h-1zM0 5h1v1h-1zM0 6h1v1h-1zM0 7h1v1h-1zM1 8h1v1h-1zM1 9h1v1h-1z"/><path fill="#696969" d="M4 1h1v1h-1zM5 1h1v1h-1zM6 1h1v1h-1zM7 1h1v1h-1zM2 2h1v1h-1zM3 2h1v1h-1zM8 2h1v1h-1zM9 2h1v1h-1zM2 3h1v1h-1zM1 4h1v1h-1zM1 5h1v1h-1zM1 6h1v1h-1zM1 7h1v1h-1zM2 8h1v1h-1z"/><path fill="#ffffff" d="M4 2h1v1h-1zM5 2h1v1h-1zM6 2h1v1h-1zM7 2h1v1h-1zM10 2h1v1h-1zM3 3h1v1h-1zM4 3h1v1h-1zM5 3h1v1h-1zM6 3h1v1h-1zM7 3h1v1h-1zM8 3h1v1h-1zM10 3h1v1h-1zM2 4h1v1h-1zM3 4h1v1h-1zM4 4h1v1h-1zM5 4h1v1h-1zM6 4h1v1h-1zM7 4h1v1h-1zM8 4h1v1h-1zM9 4h1v1h-1zM11 4h1v1h-1zM2 5h1v1h-1zM3 5h1v1h-1zM4 5h1v1h-1zM5 5h1v1h-1zM6 5h1v1h-1zM7 5h1v1h-1zM8 5h1v1h-1zM9 5h1v1h-1zM11 5h1v1h-1zM2 6h1v1h-1zM3 6h1v1h-1zM4 6h1v1h-1zM5 6h1v1h-1zM6 6h1v1h-1zM7 6h1v1h-1zM8 6h1v1h-1zM9 6h1v1h-1zM11 6h1v1h-1zM2 7h1v1h-1zM3 7h1v1h-1zM4 7h1v1h-1zM5 7h1v1h-1zM6 7h1v1h-1zM7 7h1v1h-1zM8 7h1v1h-1zM9 7h1v1h-1zM11 7h1v1h-1zM3 8h1v1h-1zM4 8h1v1h-1zM5 8h1v1h-1zM6 8h1v1h-1zM7 8h1v1h-1zM8 8h1v1h-1zM10 8h1v1h-1zM4 9h1v1h-1zM5 9h1v1h-1zM6 9h1v1h-1zM7 9h1v1h-1zM10 9h1v1h-1zM2 10h1v1h-1zM3 10h1v1h-1zM8 10h1v1h-1zM9 10h1v1h-1zM4 11h1v1h-1zM5 11h1v1h-1zM6 11h1v1h-1zM7 11h1v1h-1z"/><path fill="#e3e3e3" d="M9 3h1v1h-1zM10 4h1v1h-1zM10 5h1v1h-1zM10 6h1v1h-1zM10 7h1v1h-1zM9 8h1v1h-1zM2 9h1v1h-1zM3 9h1v1h-1zM8 9h1v1h-1zM9 9h1v1h-1zM4 10h1v1h-1zM5 10h1v1h-1zM6 10h1v1h-1zM7 10h1v1h-1z"/></svg></div>
<div class="r" style="left:442px;top:302px"><svg width="12" height="12" viewBox="0 0 12 12" shape-rendering="crispEdges"><path fill="#a0a0a0" d="M4 0h1v1h-1zM5 0h1v1h-1zM6 0h1v1h-1zM7 0h1v1h-1zM2 1h1v1h-1zM3 1h1v1h-1zM8 1h1v1h-1zM9 1h1v1h-1zM1 2h1v1h-1zM1 3h1v1h-1zM0 4h1v1h-1zM0 5h1v1h-1zM0 6h1v1h-1zM0 7h1v1h-1zM1 8h1v1h-1zM1 9h1v1h-1z"/><path fill="#696969" d="M4 1h1v1h-1zM5 1h1v1h-1zM6 1h1v1h-1zM7 1h1v1h-1zM2 2h1v1h-1zM3 2h1v1h-1zM8 2h1v1h-1zM9 2h1v1h-1zM2 3h1v1h-1zM1 4h1v1h-1zM1 5h1v1h-1zM1 6h1v1h-1zM1 7h1v1h-1zM2 8h1v1h-1z"/><path fill="#ffffff" d="M4 2h1v1h-1zM5 2h1v1h-1zM6 2h1v1h-1zM7 2h1v1h-1zM10 2h1v1h-1zM3 3h1v1h-1zM4 3h1v1h-1zM5 3h1v1h-1zM6 3h1v1h-1zM7 3h1v1h-1zM8 3h1v1h-1zM10 3h1v1h-1zM2 4h1v1h-1zM3 4h1v1h-1zM4 4h1v1h-1zM5 4h1v1h-1zM6 4h1v1h-1zM7 4h1v1h-1zM8 4h1v1h-1zM9 4h1v1h-1zM11 4h1v1h-1zM2 5h1v1h-1zM3 5h1v1h-1zM4 5h1v1h-1zM5 5h1v1h-1zM6 5h1v1h-1zM7 5h1v1h-1zM8 5h1v1h-1zM9 5h1v1h-1zM11 5h1v1h-1zM2 6h1v1h-1zM3 6h1v1h-1zM4 6h1v1h-1zM5 6h1v1h-1zM6 6h1v1h-1zM7 6h1v1h-1zM8 6h1v1h-1zM9 6h1v1h-1zM11 6h1v1h-1zM2 7h1v1h-1zM3 7h1v1h-1zM4 7h1v1h-1zM5 7h1v1h-1zM6 7h1v1h-1zM7 7h1v1h-1zM8 7h1v1h-1zM9 7h1v1h-1zM11 7h1v1h-1zM3 8h1v1h-1zM4 8h1v1h-1zM5 8h1v1h-1zM6 8h1v1h-1zM7 8h1v1h-1zM8 8h1v1h-1zM10 8h1v1h-1zM4 9h1v1h-1zM5 9h1v1h-1zM6 9h1v1h-1zM7 9h1v1h-1zM10 9h1v1h-1zM2 10h1v1h-1zM3 10h1v1h-1zM8 10h1v1h-1zM9 10h1v1h-1zM4 11h1v1h-1zM5 11h1v1h-1zM6 11h1v1h-1zM7 11h1v1h-1z"/><path fill="#e3e3e3" d="M9 3h1v1h-1zM10 4h1v1h-1zM10 5h1v1h-1zM10 6h1v1h-1zM10 7h1v1h-1zM9 8h1v1h-1zM2 9h1v1h-1zM3 9h1v1h-1zM8 9h1v1h-1zM9 9h1v1h-1zM4 10h1v1h-1zM5 10h1v1h-1zM6 10h1v1h-1zM7 10h1v1h-1z"/></svg></div>
<div class="r" style="left:442px;top:375px"><svg width="12" height="12" viewBox="0 0 12 12" shape-rendering="crispEdges"><path fill="#a0a0a0" d="M4 0h1v1h-1zM5 0h1v1h-1zM6 0h1v1h-1zM7 0h1v1h-1zM2 1h1v1h-1zM3 1h1v1h-1zM8 1h1v1h-1zM9 1h1v1h-1zM1 2h1v1h-1zM1 3h1v1h-1zM0 4h1v1h-1zM0 5h1v1h-1zM0 6h1v1h-1zM0 7h1v1h-1zM1 8h1v1h-1zM1 9h1v1h-1z"/><path fill="#696969" d="M4 1h1v1h-1zM5 1h1v1h-1zM6 1h1v1h-1zM7 1h1v1h-1zM2 2h1v1h-1zM3 2h1v1h-1zM8 2h1v1h-1zM9 2h1v1h-1zM2 3h1v1h-1zM1 4h1v1h-1zM1 5h1v1h-1zM1 6h1v1h-1zM1 7h1v1h-1zM2 8h1v1h-1z"/><path fill="#ffffff" d="M4 2h1v1h-1zM5 2h1v1h-1zM6 2h1v1h-1zM7 2h1v1h-1zM10 2h1v1h-1zM3 3h1v1h-1zM4 3h1v1h-1zM5 3h1v1h-1zM6 3h1v1h-1zM7 3h1v1h-1zM8 3h1v1h-1zM10 3h1v1h-1zM2 4h1v1h-1zM3 4h1v1h-1zM4 4h1v1h-1zM5 4h1v1h-1zM6 4h1v1h-1zM7 4h1v1h-1zM8 4h1v1h-1zM9 4h1v1h-1zM11 4h1v1h-1zM2 5h1v1h-1zM3 5h1v1h-1zM4 5h1v1h-1zM5 5h1v1h-1zM6 5h1v1h-1zM7 5h1v1h-1zM8 5h1v1h-1zM9 5h1v1h-1zM11 5h1v1h-1zM2 6h1v1h-1zM3 6h1v1h-1zM4 6h1v1h-1zM5 6h1v1h-1zM6 6h1v1h-1zM7 6h1v1h-1zM8 6h1v1h-1zM9 6h1v1h-1zM11 6h1v1h-1zM2 7h1v1h-1zM3 7h1v1h-1zM4 7h1v1h-1zM5 7h1v1h-1zM6 7h1v1h-1zM7 7h1v1h-1zM8 7h1v1h-1zM9 7h1v1h-1zM11 7h1v1h-1zM3 8h1v1h-1zM4 8h1v1h-1zM5 8h1v1h-1zM6 8h1v1h-1zM7 8h1v1h-1zM8 8h1v1h-1zM10 8h1v1h-1zM4 9h1v1h-1zM5 9h1v1h-1zM6 9h1v1h-1zM7 9h1v1h-1zM10 9h1v1h-1zM2 10h1v1h-1zM3 10h1v1h-1zM8 10h1v1h-1zM9 10h1v1h-1zM4 11h1v1h-1zM5 11h1v1h-1zM6 11h1v1h-1zM7 11h1v1h-1z"/><path fill="#e3e3e3" d="M9 3h1v1h-1zM10 4h1v1h-1zM10 5h1v1h-1zM10 6h1v1h-1zM10 7h1v1h-1zM9 8h1v1h-1zM2 9h1v1h-1zM3 9h1v1h-1zM8 9h1v1h-1zM9 9h1v1h-1zM4 10h1v1h-1zM5 10h1v1h-1zM6 10h1v1h-1zM7 10h1v1h-1z"/></svg></div>
</body></html>
